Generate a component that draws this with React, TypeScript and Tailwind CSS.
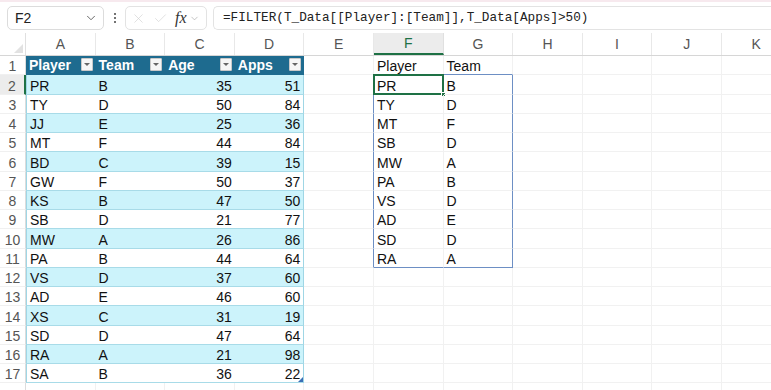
import { Check, ChevronDown, X } from "lucide-react";

const COLS = ["A", "B", "C", "D", "E", "F", "G", "H", "I", "J", "K"];

const DATA: [string, string, number, number][] = [
  ["PR", "B", 35, 51],
  ["TY", "D", 50, 84],
  ["JJ", "E", 25, 36],
  ["MT", "F", 44, 84],
  ["BD", "C", 39, 15],
  ["GW", "F", 50, 37],
  ["KS", "B", 47, 50],
  ["SB", "D", 21, 77],
  ["MW", "A", 26, 86],
  ["PA", "B", 44, 64],
  ["VS", "D", 37, 60],
  ["AD", "E", 46, 60],
  ["XS", "C", 31, 19],
  ["SD", "D", 47, 64],
  ["RA", "A", 21, 98],
  ["SA", "B", 36, 22],
];

const SPILL = DATA.filter((d) => d[3] > 50).map((d) => [d[0], d[1]]);

const font = "font-['Liberation_Sans',Arial,sans-serif]";

function FilterButton() {
  return (
    <span className="ml-auto mb-[3px] mr-[3px] flex h-[13px] w-[12px] items-center justify-center rounded-[1px] border border-[#c9c9c9] bg-[#f6f6f6]">
      <span className="h-0 w-0 border-x-[3px] border-t-[3px] border-x-transparent border-t-[#666]" />
    </span>
  );
}

function FormulaBar() {
  return (
    <div className={`flex h-[33px] items-start border-t-2 border-[#f7e9ee] pt-[4px] ${font}`}>
      <div className="ml-[7px] flex h-[24px] w-[97px] items-center rounded-[5px] border border-[#dcdcdc] pl-[7px] pr-[5px] text-[14px] text-[#222]">
        <span>F2</span>
        <ChevronDown className="ml-auto text-[#555]" size={14} strokeWidth={1.5} />
      </div>
      <div className="flex h-[24px] w-[21px] flex-col items-center justify-center gap-[2px]">
        <span className="h-[2px] w-[2px] rounded-full bg-[#444]" />
        <span className="h-[2px] w-[2px] rounded-full bg-[#444]" />
        <span className="h-[2px] w-[2px] rounded-full bg-[#444]" />
      </div>
      <div className="flex h-[24px] w-[82px] items-center rounded-[5px] border border-[#e3e3e3] pl-[5px]">
        <X className="text-[#cfcfcf]" size={15} strokeWidth={1} />
        <Check className="ml-[7px] text-[#cfcfcf]" size={15} strokeWidth={1} />
        <span className="ml-[7px] font-['Liberation_Serif',serif] text-[16px] italic text-[#333]">fx</span>
        <ChevronDown className="ml-[2px] text-[#aaa]" size={11} strokeWidth={1.5} />
      </div>
      <div className="ml-[6px] flex h-[24px] flex-1 items-center rounded-l-[5px] border border-r-0 border-[#e3e3e3] pl-[9px] font-['Liberation_Mono',monospace] text-[12.7px] text-[#222]">
        =FILTER(T_Data[[Player]:[Team]],T_Data[Apps]&gt;50)
      </div>
    </div>
  );
}

function ColumnHeader() {
  return (
    <div className={`flex h-[23px] border-b border-[#d6d6d6] ${font}`}>
      <div className="relative w-[26px] shrink-0 border-r border-[#e0e0e0]">
        <span className="absolute bottom-[2px] right-[2px] h-0 w-0 border-l-[9px] border-b-[9px] border-l-transparent border-b-[#e2e2e2]" />
      </div>
      {COLS.map((c) => {
        const sel = c === "F";
        return (
          <div
            key={c}
            className={`flex w-[69.6px] shrink-0 items-center justify-center border-r text-[14px] ${
              sel
                ? "border-b-2 border-r-[#e0e0e0] border-b-[#1e7145] bg-[#ececec] text-[#1e7145]"
                : "border-[#e8e8e8] text-[#555]"
            }`}
          >
            {c}
          </div>
        );
      })}
    </div>
  );
}

type CellSpec = { text?: string; right?: boolean; cls?: string; children?: React.ReactNode };

function Row({ n, cells, label = true }: { n: number; cells: CellSpec[]; label?: boolean }) {
  const sel = n === 2;
  return (
    <div className={`flex h-[19.25px] ${font} text-[14px] leading-[16px]`}>
      <div
        className={`flex w-[26px] shrink-0 items-end justify-center border-b border-[#f0f0f0] text-[#555] ${
          sel ? "border-r-2 border-r-[#1e7145] bg-[#ececec] text-[#1e7145]" : "border-r border-r-[#dcdcdc]"
        }`}
      >
        {label ? n : null}
      </div>
      {cells.map((c, i) => (
        <div
          key={i}
          className={`relative flex w-[69.6px] shrink-0 items-end px-[3px] text-[#111] ${c.right ? "justify-end" : ""} ${
            c.cls ?? "border-b border-r border-[#f1f1f1]"
          }`}
        >
          {c.text}
          {c.children}
        </div>
      ))}
    </div>
  );
}

export default function App() {
  const rows: { n: number; cells: CellSpec[] }[] = [];

  // table header row
  const headerCells: CellSpec[] = COLS.map((c, i) => {
    if (i < 4) {
      return {
        cls: "border-b border-[#1e6b8f] bg-[#1e6b8f] font-bold !pl-[3px] !pr-0",
        children: (
          <>
            <span className="pb-[1px] text-[14px] text-white">{["Player", "Team", "Age", "Apps"][i]}</span>
            <FilterButton />
          </>
        ),
      };
    }
    if (c === "F") return { text: "Player", cls: "border-b border-r border-b-[#6d8fc4] border-r-[#f1f1f1]" };
    if (c === "G") return { text: "Team", cls: "border-b border-r border-b-[#6d8fc4] border-r-[#f1f1f1]" };
    return {};
  });
  rows.push({ n: 1, cells: headerCells });

  for (let r = 0; r < 17; r++) {
    const n = r + 2;
    const d = DATA[r];
    const band = n % 2 === 0;
    const spill = r < SPILL.length ? SPILL[r] : null;
    const cells: CellSpec[] = COLS.map((c, i) => {
      if (d && i < 4) {
        const bg = band ? "bg-[#ccf3fb]" : "bg-white";
        const left = i === 0 ? "border-l border-l-[#9fd6e5]" : "";
        const right = i === 3 ? "border-r border-r-[#9fd6e5]" : "";
        return {
          text: String(d[i]),
          right: i >= 2,
          cls: `border-b border-[#a8dbe8] ${bg} ${left} ${right}`,
          children:
            n === 17 && i === 3 ? (
              <span className="absolute bottom-0 right-0 h-0 w-0 border-l-[5px] border-b-[5px] border-l-transparent border-b-[#3b6fb6]" />
            ) : undefined,
        };
      }
      if (c === "E" && spill) return { cls: "border-b border-r border-b-[#f1f1f1] border-r-[#6d8fc4]" };
      if (c === "F" && spill) {
        const last = r === SPILL.length - 1;
        return {
          text: spill[0],
          cls: `border-b border-r border-r-[#f1f1f1] ${last ? "border-b-[#6d8fc4]" : "border-b-[#f1f1f1]"}`,
          children:
            r === 0 ? (
              <>
                <span className="pointer-events-none absolute inset-x-[-1px] bottom-[-1px] top-[-1px] border-2 border-[#1e7145]" />
                <span className="absolute bottom-[-3px] right-[-3px] h-[5px] w-[5px] border border-white bg-[#1e7145]" />
              </>
            ) : undefined,
        };
      }
      if (c === "G" && spill) {
        const last = r === SPILL.length - 1;
        return {
          text: spill[1],
          cls: `border-b border-r border-r-[#6d8fc4] ${last ? "border-b-[#6d8fc4]" : "border-b-[#f1f1f1]"}`,
        };
      }
      return {};
    });
    rows.push({ n, cells });
  }

  return (
    <div className="h-[390px] w-[771px] overflow-hidden bg-white">
      <FormulaBar />
      <ColumnHeader />
      {rows.map((r) => (
        <Row key={r.n} n={r.n} cells={r.cells} label={r.n <= 17} />
      ))}
    </div>
  );
}
